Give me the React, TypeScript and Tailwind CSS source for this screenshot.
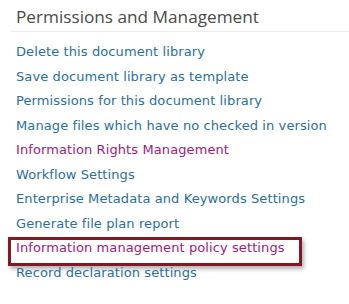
const links = [
  { label: 'Delete this document library' },
  { label: 'Save document library as template' },
  { label: 'Permissions for this document library' },
  { label: 'Manage files which have no checked in version' },
  { label: 'Information Rights Management', visited: true },
  { label: 'Workflow Settings' },
  { label: 'Enterprise Metadata and Keywords Settings' },
  { label: 'Generate file plan report' },
  { label: 'Information management policy settings', visited: true, highlight: true },
  { label: 'Record declaration settings' },
];

export default function App() {
  return (
    <div className="w-[349px] h-[304px] bg-white overflow-hidden">
      <div className="ml-[10px] pt-[6.5px] pl-[6px] pb-[4.5px] border-b border-[#ededed]">
        <h2 className="text-[17.2px] leading-[20px] text-[#4a4a4a] font-['Open_Sans',sans-serif]">
          Permissions and Management
        </h2>
      </div>
      <ul className="pt-[7.9px] font-['DejaVu_Sans',Verdana,sans-serif] text-[13px] tracking-[0.1px]">
        {links.map((l) => (
          <li key={l.label} className="relative h-[24.5px] flex items-center pl-[16px]">
            <a className={l.visited ? 'text-[#a01a7d]' : 'text-[#2a6f9e]'}>{l.label}</a>
            {l.highlight && (
              <div className="absolute left-[8px] top-[1px] w-[294px] h-[29.5px] border-[3px] border-[#7f1a24] shadow-[2px_3px_4px_rgba(0,0,0,0.3)]" />
            )}
          </li>
        ))}
      </ul>
    </div>
  );
}
